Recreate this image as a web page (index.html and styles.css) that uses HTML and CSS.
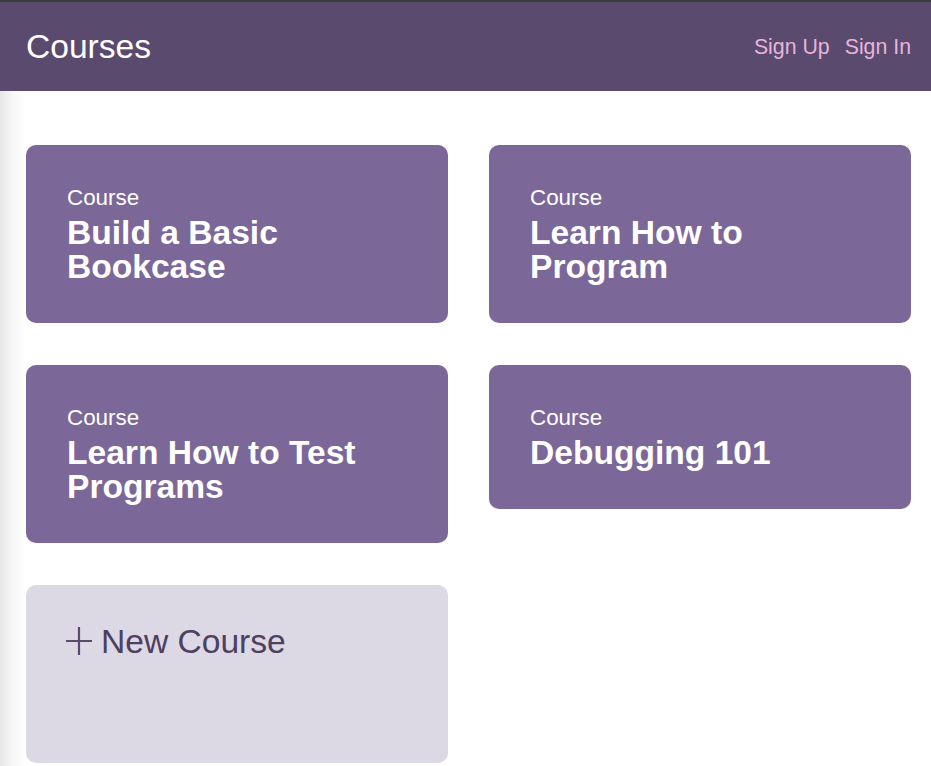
FILE: index.html
```html
<!DOCTYPE html>
<html>
<head>
<meta charset="utf-8">
<link rel="stylesheet" href="styles.css">
</head>
<body>
<header class="header">
  <div class="brand">Courses</div>
  <nav class="nav">
    <a class="nav-link" href="#">Sign Up</a>
    <a class="nav-link" href="#">Sign In</a>
  </nav>
</header>
<main class="main">
  <div class="grid">
    <a class="card" href="#">
      <div class="card-label">Course</div>
      <div class="card-title">Build a Basic Bookcase</div>
    </a>
    <a class="card" href="#">
      <div class="card-label">Course</div>
      <div class="card-title">Learn How to Program</div>
    </a>
    <a class="card" href="#">
      <div class="card-label">Course</div>
      <div class="card-title">Learn How to Test Programs</div>
    </a>
    <a class="card" href="#">
      <div class="card-label">Course</div>
      <div class="card-title">Debugging 101</div>
    </a>
    <a class="card card-new" href="#">
      <div class="new-title">
        <svg class="plus" width="28" height="30" viewBox="0 0 28 30"><path d="M14 1V29M1 15H27" stroke="#5a4a6e" stroke-width="2.2" fill="none"/></svg>
        <span>New Course</span>
      </div>
    </a>
  </div>
</main>
</body>
</html>
```
FILE: styles.css
```css
* { box-sizing: border-box; }
html, body { margin: 0; padding: 0; }
body {
  font-family: "Liberation Sans", Arial, sans-serif;
  background: #fff;
  width: 931px;
  height: 766px;
  overflow: hidden;
}
.header {
  height: 91px;
  background: #5a4a6e;
  border-top: 2px solid #3b3b3b;
  display: flex;
  align-items: center;
  justify-content: space-between;
  padding: 0 20px 0 26px;
}
.brand {
  color: #fff;
  font-size: 33.6px;
}
.nav {
  display: flex;
  gap: 15px;
  margin-top: 1px;
}
.nav-link {
  color: #e6b4dc;
  text-decoration: none;
  font-size: 21.3px;
}
.main {
  background: linear-gradient(to right, #e6e6e6 0px, #f7f7f7 12px, #ffffff 26px);
  padding: 54px 20px 0 26px;
  height: 675px;
}
.grid {
  display: grid;
  grid-template-columns: 422px 422px;
  column-gap: 41px;
  row-gap: 42px;
  align-items: start;
}
.card {
  display: block;
  background: #7b6899;
  border-radius: 10px;
  padding: 40px 41px 39px;
  color: #fff;
  text-decoration: none;
}
.card-label {
  font-size: 22.4px;
  line-height: 26px;
}
.card-title {
  font-size: 33.6px;
  font-weight: bold;
  line-height: 34px;
  margin-top: 5px;
}
.card-new {
  background: #dcd8e4;
  height: 178px;
  padding-top: 38px;
  padding-left: 39px;
}
.new-title {
  display: flex;
  align-items: center;
  gap: 8px;
  color: #4d4060;
  font-size: 33.6px;
}
.plus { display: block; margin-top: -2px; }
```
